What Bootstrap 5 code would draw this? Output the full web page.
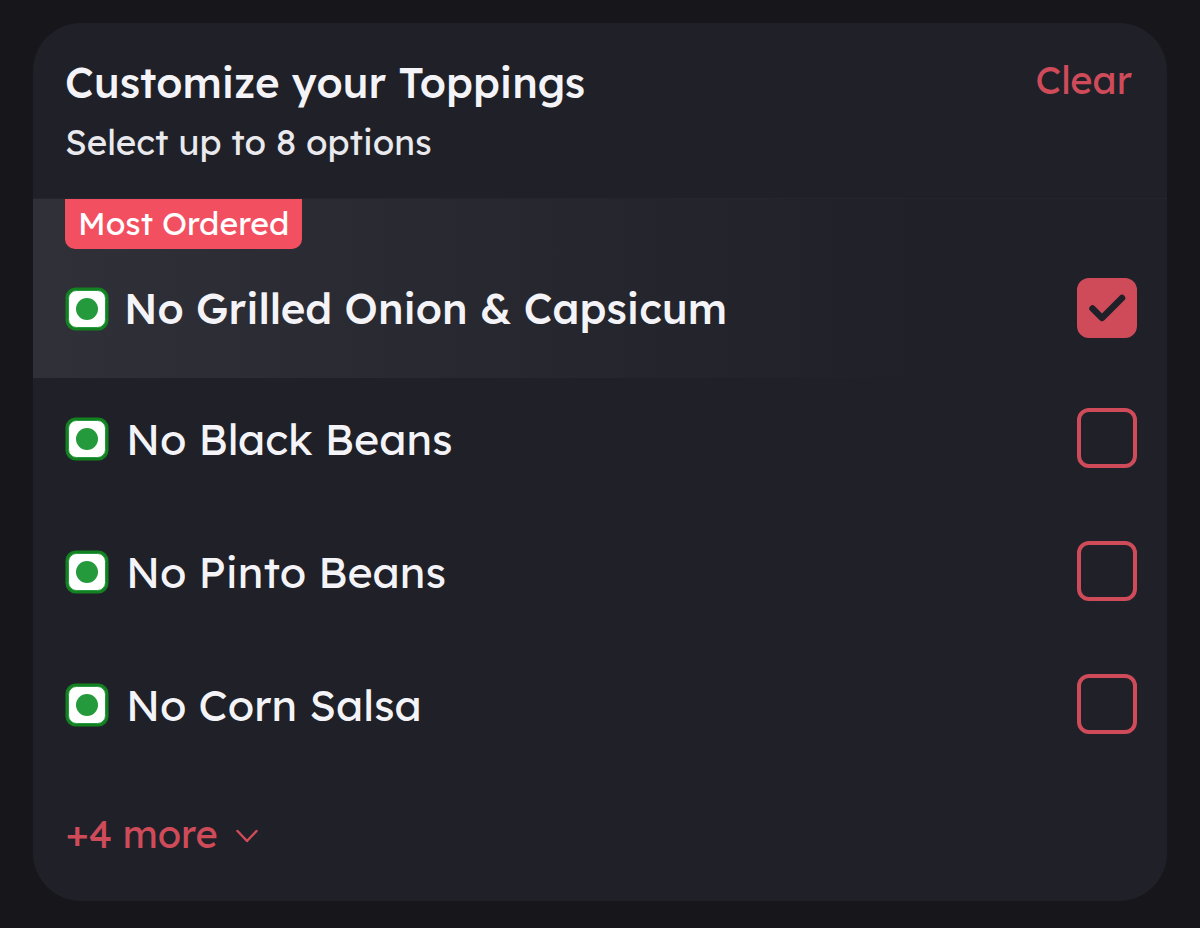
<!DOCTYPE html>
<html lang="en" data-bs-theme="dark">
<head>
<meta charset="utf-8">
<meta name="viewport" content="width=device-width, initial-scale=1">
<title>Customize your Toppings</title>
<link href="https://cdn.jsdelivr.net/npm/bootstrap@5.3.0/dist/css/bootstrap.min.css" rel="stylesheet">
<style>
:root{--accent:#cf4b5a;--panel:#202128}
body{background:#17161b;color:#f4f4f8;font-family:Lexend,"Open Sans","Noto Sans",sans-serif;padding:23px 33px 27px}
.panel{background:var(--panel);border-radius:48px;overflow:hidden}
.panel-head{padding:32px 35px 32px 32px;border-bottom:1px solid #25262d}
.title{font-size:42px;line-height:56px;font-weight:500;color:#f4f4f8}
.sub{font-size:35px;line-height:48px;margin-top:7px;color:#e9e9ee}
.accent,.accent:hover{color:var(--accent)}
.action{font-size:38px;line-height:50px}
.topping{font-size:43px;line-height:58px;padding:30px 30px 30px 32px}
.toppings{gap:13px}
.popular{background:linear-gradient(90deg,#303138,var(--panel) 78%)}
.popular .topping{font-size:42px;font-weight:500;padding-top:29px;padding-bottom:40px}
.tag{background:#f25061;color:#fff;font-size:32px;line-height:48px;padding:0 13px 2px;margin-left:32px;border-radius:0 0 10px 10px}
.veg{width:44px;height:44px}
.topping-label{gap:17px;padding-top:2px}
.popular .topping-label{gap:15px}
.form-check-input.tick{width:60px;height:60px;border:4px solid var(--accent);border-radius:12px;background-color:transparent;margin:0}
.form-check-input.tick:checked{background-color:var(--accent);background-size:60px 60px;background-position:center;background-origin:border-box;background-image:url("data:image/svg+xml,%3Csvg xmlns='http://www.w3.org/2000/svg' viewBox='0 0 60 60'%3E%3Cpath d='M15.500 30.500 25 40 45 20' fill='none' stroke='%23202128' stroke-width='6.500' stroke-linecap='round' stroke-linejoin='round'/%3E%3C/svg%3E")}
.more{margin:45px 33px 42px;gap:18px}
</style>
</head>
<body>
<svg class="d-none" aria-hidden="true">
  <symbol id="veg" viewBox="0 0 44 44"><rect x=".500" y=".500" width="43" height="43" rx="10" fill="#138021"/><rect x="3.500" y="3.500" width="37" height="37" rx="8" fill="#fff" stroke="#259a3c" stroke-width="1"/><circle cx="22" cy="22" r="11" fill="#259a3c"/></symbol>
</svg>
<main class="panel">
  <header class="panel-head d-flex justify-content-between align-items-start">
    <div>
      <h1 class="title m-0">Customize your Toppings</h1>
      <p class="sub mb-0">Select up to 8 options</p>
    </div>
    <button class="btn p-0 border-0 accent action" type="button">Clear</button>
  </header>
  <section class="popular">
    <div class="d-flex"><span class="tag">Most Ordered</span></div>
    <div class="topping d-flex align-items-center justify-content-between">
      <label class="topping-label d-flex align-items-center flex-grow-1" for="onion"><svg class="veg flex-shrink-0"><use href="#veg"/></svg>No Grilled Onion &amp; Capsicum</label>
      <input class="form-check-input tick flex-shrink-0" type="checkbox" id="onion" checked>
    </div>
  </section>
  <section class="toppings d-flex flex-column">
    <div class="topping d-flex align-items-center justify-content-between">
      <label class="topping-label d-flex align-items-center flex-grow-1" for="black"><svg class="veg flex-shrink-0"><use href="#veg"/></svg>No Black Beans</label>
      <input class="form-check-input tick flex-shrink-0" type="checkbox" id="black">
    </div>
    <div class="topping d-flex align-items-center justify-content-between">
      <label class="topping-label d-flex align-items-center flex-grow-1" for="pinto"><svg class="veg flex-shrink-0"><use href="#veg"/></svg>No Pinto Beans</label>
      <input class="form-check-input tick flex-shrink-0" type="checkbox" id="pinto">
    </div>
    <div class="topping d-flex align-items-center justify-content-between">
      <label class="topping-label d-flex align-items-center flex-grow-1" for="corn"><svg class="veg flex-shrink-0"><use href="#veg"/></svg>No Corn Salsa</label>
      <input class="form-check-input tick flex-shrink-0" type="checkbox" id="corn">
    </div>
  </section>
  <button class="more btn p-0 border-0 accent action d-flex align-items-center" type="button">+4 more
    <svg width="22" height="18" viewBox="0 0 22 18" fill="none" stroke="currentColor" stroke-width="2.500" stroke-linecap="round" stroke-linejoin="round" aria-hidden="true"><path d="M1.500 6 11 16 20.500 6"/></svg>
  </button>
</main>
<script src="https://cdn.jsdelivr.net/npm/bootstrap@5.3.0/dist/js/bootstrap.bundle.min.js"></script>
</body>
</html>
